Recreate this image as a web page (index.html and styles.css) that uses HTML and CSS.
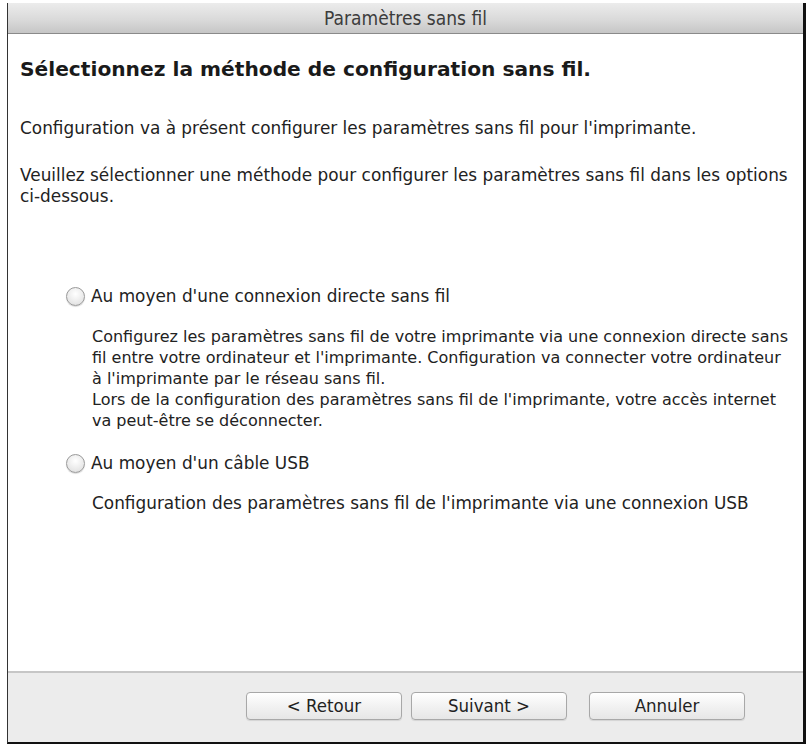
FILE: index.html
```html
<!DOCTYPE html>
<html lang="fr">
<head>
<meta charset="utf-8">
<title>Paramètres sans fil</title>
<link rel="stylesheet" href="styles.css">
</head>
<body>
<div class="window">
  <div class="titlebar">Paramètres sans fil</div>
  <div class="content">
    <h1 class="heading">Sélectionnez la méthode de configuration sans fil.</h1>
    <p class="para para-first">Configuration va à présent configurer les paramètres sans fil pour l'imprimante.</p>
    <p class="para">Veuillez sélectionner une méthode pour configurer les paramètres sans fil dans les options ci-dessous.</p>
    <div class="options">
      <div class="option">
        <label class="radio-row"><span class="radio"></span><span class="radio-label">Au moyen d'une connexion directe sans fil</span></label>
        <p class="desc">Configurez les paramètres sans fil de votre imprimante via une connexion directe sans<br>fil entre votre ordinateur et l'imprimante. Configuration va connecter votre ordinateur<br>à l'imprimante par le réseau sans fil.<br>Lors de la configuration des paramètres sans fil de l'imprimante, votre accès internet<br>va peut-être se déconnecter.</p>
      </div>
      <div class="option">
        <label class="radio-row"><span class="radio"></span><span class="radio-label">Au moyen d'un câble USB</span></label>
        <p class="desc desc-usb">Configuration des paramètres sans fil de l'imprimante via une connexion USB</p>
      </div>
    </div>
  </div>
  <div class="footer">
    <button class="btn">&lt; Retour</button>
    <button class="btn">Suivant &gt;</button>
    <button class="btn btn-cancel">Annuler</button>
  </div>
</div>
</body>
</html>
```
FILE: styles.css
```css
* { box-sizing: border-box; }
html, body { margin: 0; padding: 0; background: #ffffff; }
body {
  font-family: "DejaVu Sans", "Liberation Sans", sans-serif;
  color: #222;
  padding: 3px 6px 7px 7px;
}
.window {
  width: 799px;
  height: 741px;
  border-left: 1px solid #333;
  border-right: 3px solid #111;
  border-bottom: 2px solid #111;
  display: flex;
  flex-direction: column;
  background: #fff;
  overflow: hidden;
}
.titlebar {
  height: 31px;
  flex: none;
  background: linear-gradient(#ececec, #d8d8d8 60%, #c6c6c6);
  border-bottom: 1px solid #8a8a8a;
  text-align: center;
  font-family: "DejaVu Sans Condensed", "DejaVu Sans", sans-serif;
  font-size: 19px;
  line-height: 30px;
  color: #3c3c3c;
}
.content {
  flex: 1;
  padding: 21px 10px 0 12px;
}
.heading {
  margin: 0;
  font-size: 20.2px;
  font-weight: bold;
  color: #1a1a1a;
  line-height: 28px;
}
.para {
  margin: 0;
  font-size: 16.9px;
  line-height: 21px;
}
.para-first { margin-top: 35px; margin-bottom: 26px; }
.options { padding-left: 46px; margin-top: 79px; }
.option { margin-bottom: 22px; }
.radio-row { display: flex; align-items: center; gap: 6px; font-size: 16.9px; line-height: 21px; }
.radio {
  width: 19px;
  height: 19px;
  border-radius: 50%;
  border: 1px solid #9a9a9a;
  background: radial-gradient(circle at 50% 35%, #ffffff, #e6e6e6 70%, #d0d0d0);
  box-shadow: 0 1px 1px rgba(0,0,0,0.15);
  flex: none;
}
.desc {
  margin: 19px 0 0 26px;
  font-size: 16px;
  line-height: 21px;
  white-space: nowrap;
}
.desc-usb { font-size: 16.9px; }
.footer {
  height: 71px;
  flex: none;
  background: #ececec;
  border-top: 2px solid #c6c6c6;
  display: flex;
  align-items: flex-start;
  justify-content: flex-end;
  padding: 19px 58px 0 0;
  gap: 9px;
}
.btn {
  width: 156px;
  height: 28px;
  font-family: "DejaVu Sans Condensed", "DejaVu Sans", sans-serif;
  font-size: 18.5px;
  line-height: 26px;
  color: #222;
  background: linear-gradient(#ffffff, #f2f2f2 50%, #e6e6e6);
  border: 1px solid #a8a8a8;
  border-radius: 4px;
  box-shadow: 0 1px 1px rgba(0,0,0,0.1);
  padding: 0;
}
.btn-cancel { margin-left: 13px; }
```
